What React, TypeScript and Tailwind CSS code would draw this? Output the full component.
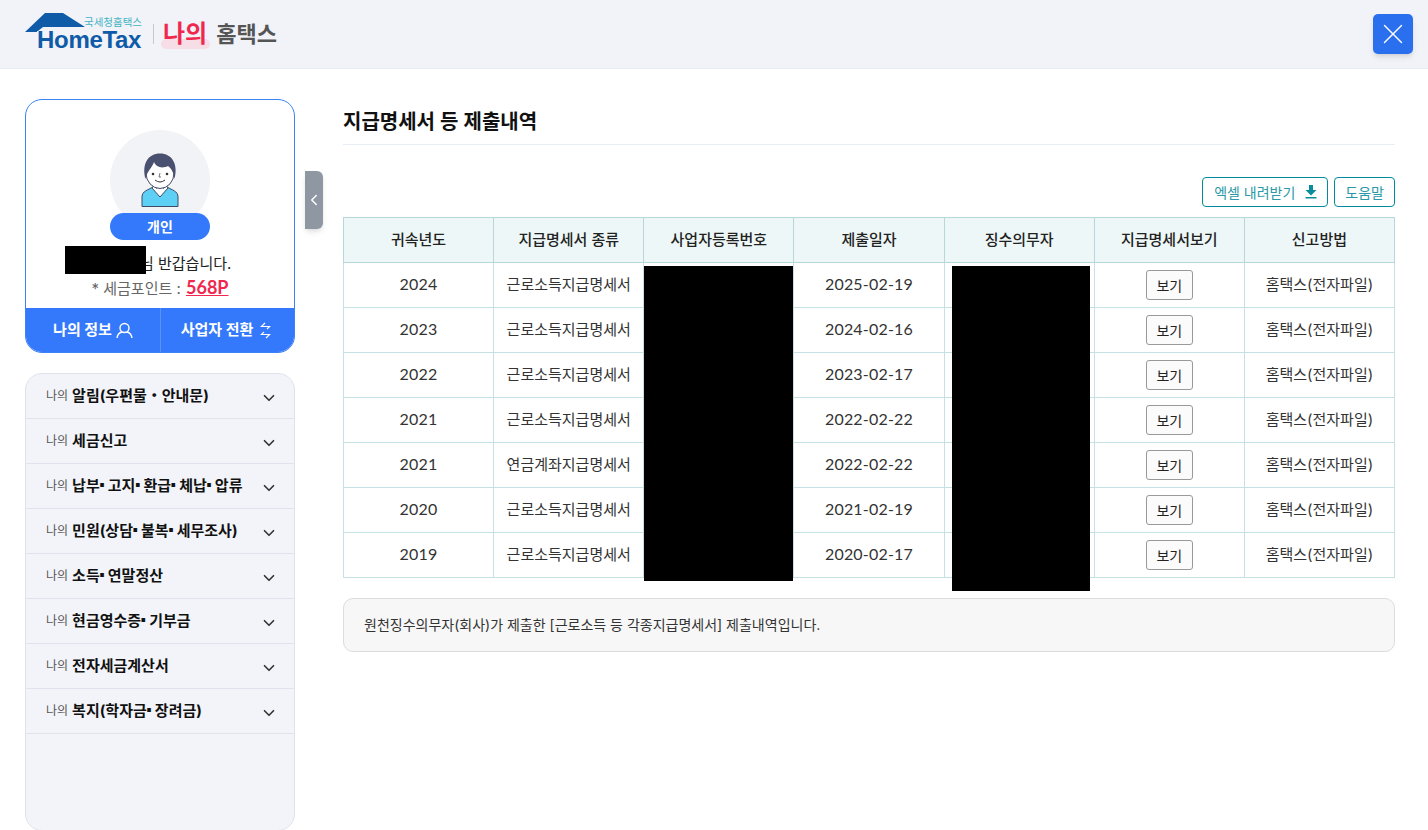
import React from "react";
import { ChevronDown, ChevronLeft, X } from "lucide-react";

const font = { fontFamily: 'Inter, "Noto Sans CJK KR", sans-serif' };

const rows = [
  ["2024", "근로소득지급명세서", "2025-02-19"],
  ["2023", "근로소득지급명세서", "2024-02-16"],
  ["2022", "근로소득지급명세서", "2023-02-17"],
  ["2021", "근로소득지급명세서", "2022-02-22"],
  ["2021", "연금계좌지급명세서", "2022-02-22"],
  ["2020", "근로소득지급명세서", "2021-02-19"],
  ["2019", "근로소득지급명세서", "2020-02-17"],
];
const heads = ["귀속년도", "지급명세서 종류", "사업자등록번호", "제출일자", "징수의무자", "지급명세서보기", "신고방법"];
const menus = ["알림(우편물・안내문)", "세금신고", "납부ㆍ고지ㆍ환급ㆍ체납ㆍ압류", "민원(상담ㆍ불복ㆍ세무조사)", "소득ㆍ연말정산", "현금영수증ㆍ기부금", "전자세금계산서", "복지(학자금ㆍ장려금)"];

function MenuLabel({ text }: { text: string }) {
  const parts = text.split("ㆍ");
  return (
    <>
      {parts.map((p, i) => (
        <React.Fragment key={i}>
          {p}
          {i < parts.length - 1 && <span className="relative top-[-4px] mr-[3.500px] text-[5px]">■</span>}
        </React.Fragment>
      ))}
    </>
  );
}

function Logo() {
  return (
    <div className="flex items-center">
      <div className="relative top-[-3px] w-[118px] h-[38px]">
        <svg className="absolute left-0 top-0" width="62" height="22" viewBox="0 0 62 22">
          <path d="M0 20 L20 1 H38 L60 15 H18 L13 19 H12 V20 Z" fill="#0f5ba8" />
        </svg>
        <span className="absolute right-[1px] top-[4px] text-[10.500px] leading-[14px] text-[#45b3c4]">국세청홈택스</span>
        <span className="absolute left-[12px] bottom-0 text-[24px] leading-[20px] font-bold tracking-[-0.3px] text-[#0f5ba8]" style={{ fontFamily: '"Liberation Sans", sans-serif' }}>HomeTax</span>
      </div>
      <div className="w-px h-5 bg-[#c4c8cf] ml-[10px] mr-[9px]" />
      <div className="relative mr-[9px]">
        <div className="absolute left-[-2px] right-[-3px] bottom-[-1px] h-[10px] rounded-full bg-[#f6dde6]" />
        <span className="relative block text-[24px] leading-[28px] font-bold text-[#f0284f]">나의</span>
      </div>
      <span className="text-[22px] leading-[28px] font-bold text-[#555]">홈택스</span>
    </div>
  );
}

function Avatar() {
  return (
    <svg width="38" height="54" viewBox="0 0 38 54">
      <path d="M1 53.500 V44 C1 38 7 37 12 34 H26 C31 37 37 38 37 44 V53.500 Z" fill="#5fd0f5" stroke="#3f4a66" strokeWidth="1" />
      <path d="M11 35 L19 44 L27 35 L24 31 H14 Z" fill="#fff" stroke="#3f4a66" strokeWidth="1" />
      <path d="M19 31.500 L15 36 M19 31.500 L23 36" stroke="#3f4a66" strokeWidth="0.700" />
      <ellipse cx="19" cy="20" rx="14" ry="15.500" fill="#fff" stroke="#3f4a66" strokeWidth="1" />
      <path d="M4.500 26 C0.500 11 7 0.500 19 0.500 C31 0.500 37.500 11 33.500 26 C33 21 31 16 27 13 C21 16 15 14 13 9 C11 15 6 18 4.500 26 Z" fill="#4a5170" />
      <circle cx="12" cy="21" r="1.300" fill="#333" />
      <circle cx="26" cy="21" r="1.300" fill="#333" />
      <path d="M19 20 L18 24 H20" fill="none" stroke="#555" strokeWidth="0.800" />
      <path d="M14 27 Q19 31 24 27" fill="none" stroke="#333" strokeWidth="1" />
    </svg>
  );
}

function ProfileCard() {
  return (
    <div className="relative h-[254px] rounded-[17px] border border-[#3b82f6] bg-white overflow-hidden flex flex-col items-center">
      <div className="relative mt-[30px] w-[100px] h-[110px] flex justify-center shrink-0">
        <div className="w-[100px] h-[100px] rounded-full bg-[#f1f3f7] flex justify-center items-start pt-[23px] overflow-hidden">
          <Avatar />
        </div>
        <div className="absolute left-0 top-[83px] w-[100px] h-[27px] rounded-full bg-[#3479fb] text-white text-[14px] font-bold flex items-center justify-center">개인</div>
      </div>
      <div className="mt-[14px] h-[20px] w-full text-[15px] leading-[20px] text-[#222] pl-[114px]">님 반갑습니다.</div>
      <div className="mt-[2px] text-[15px] leading-[22px] text-[#666]">
        * 세금포인트 : <span className="ml-[1px] font-[Lato] text-[18px] font-bold text-[#f0284f] underline">568P</span>
      </div>
      <div className="absolute left-0 right-0 bottom-0 h-[44px] bg-[#3479fb] flex text-white text-[15px] font-bold">
        <div className="w-[135px] shrink-0 flex items-center justify-center gap-[4px] border-r border-[#5a92fb]">
          나의 정보
          <svg width="17" height="17" viewBox="0 0 17 17" fill="none" stroke="#fff" strokeWidth="1.400">
            <circle cx="8.500" cy="6" r="4.500" />
            <path d="M1 16 C1.500 12 4 10.500 6 10 M16 16 C15.500 12 13 10.500 11 10" />
          </svg>
        </div>
        <div className="flex-1 flex items-center justify-center gap-[7px] pr-[3px]">
          사업자 전환
          <svg width="11" height="17" viewBox="0 0 11 17" fill="none" stroke="#fff" strokeWidth="1.200">
            <path d="M5 1 L1.500 4.500 H9.500 L7 7" />
            <path d="M6 16 L9.500 12.500 H1.500 L4 10" />
          </svg>
        </div>
      </div>
    </div>
  );
}

function Menu() {
  return (
    <div className="mt-5 h-[458px] rounded-[17px] border border-[#e0e3ee] bg-[#f2f4f9] overflow-hidden">
      {menus.map((m) => (
        <div key={m} className="h-[45px] border-b border-[#e0e3ee] flex items-center pl-5 pr-4">
          <span className="text-[12px] text-[#555] mr-[4px]">나의</span>
          <span className="text-[15px] font-bold text-[#111] flex-1 whitespace-nowrap"><MenuLabel text={m} /></span>
          <ChevronDown size={18} strokeWidth={2.200} className="text-[#333] relative top-[2px]" />
        </div>
      ))}
    </div>
  );
}

function Table() {
  const td = "border border-[#c6e1e4]";
  const num = "border border-[#c6e1e4] font-[Lato] text-[16px] tracking-[0.2px] pb-[2px]";
  return (
    <div className="relative mt-[10px]">
      <table className="w-full table-fixed border-collapse border border-[#a9cfd2] text-[15px] text-[#333] text-center">
        <thead>
          <tr className="h-[45px] bg-[#edf7f7]">
            {heads.map((h) => (
              <th key={h} className="border border-[#b7d8db] font-medium text-[#222]">{h}</th>
            ))}
          </tr>
        </thead>
        <tbody>
          {rows.map((r, i) => (
            <tr key={i} className="h-[45px]">
              <td className={num}>{r[0]}</td>
              <td className={td}>{r[1]}</td>
              <td className={td}></td>
              <td className={num}>{r[2]}</td>
              <td className={td}></td>
              <td className={td}>
                <button className="w-[47px] h-[30px] rounded-[3px] border border-[#999] bg-[#fbfbfb] text-[14px] text-[#222]">보기</button>
              </td>
              <td className={td}>홈택스(전자파일)</td>
            </tr>
          ))}
        </tbody>
      </table>
      <div className="absolute left-[301px] top-[49px] w-[149px] h-[315px] bg-black" />
      <div className="absolute left-[609px] top-[49px] w-[138px] h-[325px] bg-black" />
    </div>
  );
}

export default function App() {
  return (
    <div className="h-screen overflow-hidden bg-white" style={font}>
      <header className="h-[69px] bg-[#f1f3f8] border-b border-[#e8edf5] flex items-center justify-between pl-[25px] pr-[15px]">
        <Logo />
        <button className="w-10 h-10 rounded-[5px] bg-[#2a6fed] shadow-md flex items-center justify-center">
          <X size={34} strokeWidth={1} className="text-white" />
        </button>
      </header>
      <div className="flex">
        <aside className="relative w-[270px] ml-[25px] mt-[30px] shrink-0">
          <ProfileCard />
          <Menu />
          <div className="absolute left-[280px] top-[72px] w-[18px] h-[58px] rounded-r-[6px] bg-[#8f97a3] shadow-md flex items-center justify-center">
            <ChevronLeft size={18} strokeWidth={2} className="text-white" />
          </div>
        </aside>
        <main className="flex-1 ml-[48px] mr-[33px] mt-[30px]">
          <h1 className="h-[46px] border-b border-[#e8eef6] text-[20px] leading-[46px] font-semibold text-[#111]">지급명세서 등 제출내역</h1>
          <div className="mt-[32px] flex justify-end gap-[6px]">
            <button className="h-[30px] pl-[11px] pr-[10px] rounded-[4px] border border-[#008c9c] bg-white text-[14px] text-[#2b9aa6] flex items-center gap-[10px]">
              엑셀 내려받기
              <svg width="12" height="14" viewBox="0 0 12 14" fill="#0a8c9c"><path d="M4 0 H8 V5 H11.500 L6 10.500 L0.500 5 H4 Z" /><rect x="0.500" y="12" width="11" height="1.500" /></svg>
            </button>
            <button className="h-[30px] px-[10px] rounded-[4px] border border-[#008c9c] bg-white text-[14px] text-[#2b9aa6]">도움말</button>
          </div>
          <Table />
          <div className="mt-5 h-[54px] rounded-[10px] border border-[#dcdcdc] bg-[#f7f7f7] flex items-center px-[20px] pb-[2px] text-[14px] text-[#333]">
            원천징수의무자(회사)가 제출한 [근로소득 등 각종지급명세서] 제출내역입니다.
          </div>
        </main>
      </div>
      <div className="fixed left-[65px] top-[246px] w-[81px] h-[28px] bg-black" />
    </div>
  );
}
